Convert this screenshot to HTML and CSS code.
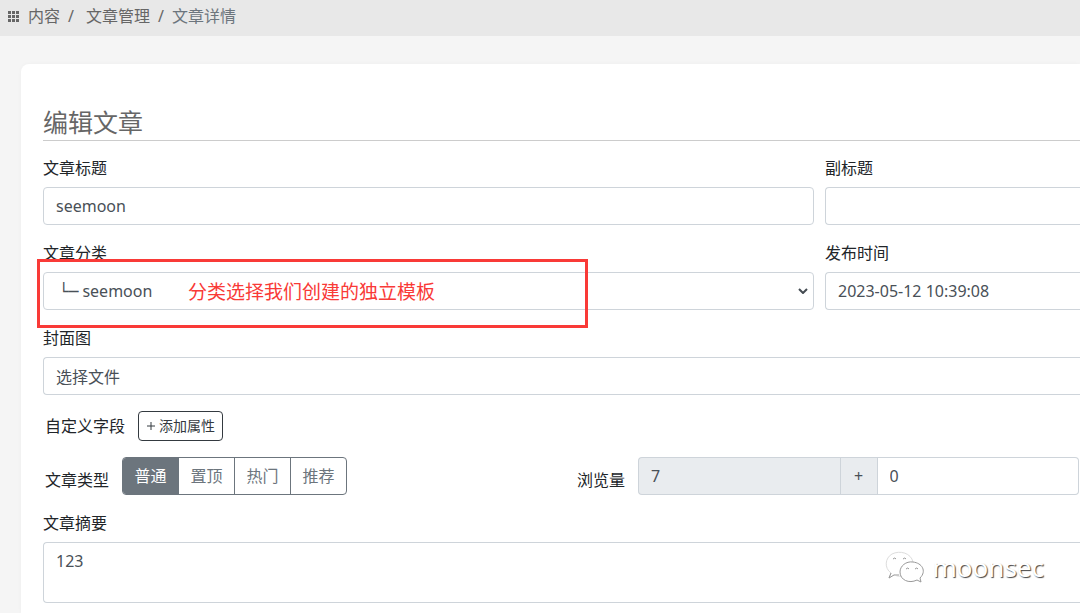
FILE: index.html
```html
<!DOCTYPE html>
<html lang="zh-CN">
<head>
<meta charset="utf-8">
<title>文章详情</title>
<link rel="stylesheet" href="styles.css">
</head>
<body>
<nav class="crumbs" aria-label="面包屑">
  <svg class="grid-icon" viewBox="0 0 11 11" aria-hidden="true"><path d="M0 0h3v3H0zM4 0h3v3H4zM8 0h3v3H8zM0 4h3v3H0zM4 4h3v3H4zM8 4h3v3H8zM0 8h3v3H0zM4 8h3v3H4zM8 8h3v3H8z"/></svg>
  <a class="crumb" href="#">内容</a>
  <span class="slash">/</span>
  <a class="crumb crumb-section" href="#">文章管理</a>
  <span class="slash">/</span>
  <span class="crumb current">文章详情</span>
</nav>
<main class="card">
  <h1 class="title">编辑文章</h1>
  <form class="form">
    <div class="columns">
      <div class="field">
        <label for="title">文章标题</label>
        <input class="control" id="title" type="text" value="seemoon">
      </div>
      <div class="field">
        <label for="subtitle">副标题</label>
        <input class="control bleed" id="subtitle" type="text">
      </div>
    </div>
    <div class="columns">
      <div class="field annotated">
        <label for="category">文章分类</label>
        <div class="select-wrap">
          <select class="control" id="category"><option>└─ seemoon</option></select>
          <svg class="chevron" viewBox="0 0 10 6" aria-hidden="true"><path d="M1 1l4 4 4-4"/></svg>
        </div>
        <div class="note">分类选择我们创建的独立模板</div>
      </div>
      <div class="field">
        <label for="published">发布时间</label>
        <input class="control bleed" id="published" type="text" value="2023-05-12 10:39:08">
      </div>
    </div>
    <div class="field">
      <label for="cover">封面图</label>
      <input class="control bleed" id="cover" type="text" value="选择文件" readonly>
    </div>
    <div class="inline">
      <span>自定义字段</span>
      <button class="add" type="button"><svg viewBox="0 0 10 10" aria-hidden="true"><path d="M5 1v8M1 5h8"/></svg>添加属性</button>
    </div>
    <div class="split">
      <div class="inline" role="radiogroup" aria-labelledby="kind">
        <span class="low" id="kind">文章类型</span>
        <div class="segments">
          <input type="radio" name="kind" id="k1" checked><label for="k1">普通</label>
          <input type="radio" name="kind" id="k2"><label for="k2">置顶</label>
          <input type="radio" name="kind" id="k3"><label for="k3">热门</label>
          <input type="radio" name="kind" id="k4"><label for="k4">推荐</label>
        </div>
      </div>
      <div class="inline">
        <label class="low" for="views">浏览量</label>
        <div class="group">
          <input class="control" id="views" type="text" value="7" readonly>
          <span class="plus">+</span>
          <input class="control" type="text" value="0" aria-label="增加浏览量">
        </div>
      </div>
    </div>
    <div class="field summary">
      <label for="summary">文章摘要</label>
      <textarea class="control bleed" id="summary">123</textarea>
      <div class="watermark">
        <svg viewBox="0 0 40 32" aria-hidden="true">
          <path class="faint" d="M18 25Q13 26 9 24L4 27L6 22C-1 17 0 7 7 3C15-1 26 2 28 11"/>
          <path d="M4 27L6 22M4 27L9 24L14 24"/>
          <path d="M28 11C21 10 15 15 15 21C15 29 24 33 32 29L36 31L35 27C42 20 37 12 28 11"/>
          <path d="M8 8q2-2 3 0M18 8q2-2 3 0M21 18q2-2 3 0M30 18q2-2 3 0"/>
        </svg>
        <span>moonsec</span>
      </div>
    </div>
  </form>
</main>
</body>
</html>
```
FILE: styles.css
```css
* { box-sizing: border-box; }

body {
  display: flex;
  flex-direction: column;
  min-height: 100vh;
  margin: 0;
  background: #f5f5f5;
  color: #212529;
  font: 16px/24px "Noto Sans", "DejaVu Sans", "Noto Sans CJK SC", sans-serif;
}

input, select, textarea, button { font: inherit; }

.crumbs {
  display: flex;
  align-items: center;
  height: 36px;
  padding: 0 8px 4px;
  background: #e8e8e8;
  color: #666;
}
.grid-icon { width: 11px; height: 11px; margin-right: 9px; fill: #666; }
.crumb { color: #666; text-decoration: none; }
.crumb-section { margin-left: 4px; }
.current { color: #6c757d; }
.slash { margin: 0 8px; }

.card {
  flex: 1;
  margin: 28px 0 0 21px;
  padding: 40px 0 0 22px;
  background: #fff;
  border-radius: 8px 0 0 0;
  box-shadow: 0 0 4px rgba(0, 0, 0, 0.03);
}
.title {
  margin: 0 0 15px;
  border-bottom: 1px solid #ccc;
  color: #666;
  font-size: 25px;
  font-weight: 400;
  line-height: 36px;
}

.form { display: flex; flex-direction: column; gap: 16px; }
.columns { display: grid; grid-template-columns: 771fr 255fr; gap: 11px; }
.field { display: flex; flex-direction: column; gap: 7px; min-width: 0; }

.control {
  width: 100%;
  min-width: 0;
  height: 38px;
  padding: 0 12px;
  border: 1px solid #ced4da;
  border-radius: 4px;
  background: #fff;
  color: #495057;
}
.bleed { border-right: 0; border-radius: 4px 0 0 4px; }

.select-wrap { display: grid; align-items: center; }
.select-wrap > * { grid-area: 1 / 1; }
.select-wrap select { appearance: none; padding-left: 15px; }
.chevron {
  justify-self: end;
  width: 10px;
  height: 6px;
  margin-right: 6px;
  fill: none;
  stroke: #444b52;
  stroke-width: 2;
  pointer-events: none;
}

.annotated { position: relative; }
.note {
  position: absolute;
  top: 18px;
  left: -6px;
  width: 551px;
  height: 69px;
  padding-left: 148px;
  border: 3px solid #f93a37;
  color: #f93a37;
  font-size: 19px;
  line-height: 60px;
  pointer-events: none;
}

.inline { display: flex; align-items: center; gap: 13px; padding-left: 2px; }
.add {
  display: flex;
  align-items: center;
  gap: 3px;
  height: 30px;
  padding: 0 7px;
  border: 1px solid #343a40;
  border-radius: 4px;
  background: #fff;
  color: #343a40;
  font-size: 14px;
}
.add svg { width: 10px; height: 10px; fill: none; stroke: #343a40; }

.split { display: grid; grid-template-columns: 532fr 505fr; }
.low { padding-top: 8px; white-space: nowrap; }

.segments { display: flex; border: 1px solid #6c757d; border-radius: 4px; overflow: hidden; }
.segments input { position: absolute; opacity: 0; pointer-events: none; }
.segments label {
  width: 56px;
  line-height: 36px;
  border-left: 1px solid #6c757d;
  color: #6c757d;
  text-align: center;
}
.segments label:first-of-type { width: 55px; border-left: 0; }
.segments input:checked + label { background: #6c757d; color: #fff; }

.group { display: flex; flex: 1; min-width: 0; padding-right: 1px; }
.group .control { flex: 1; }
.group .control:first-child { border-right: 0; border-radius: 4px 0 0 4px; background: #e9ecef; }
.group .control:last-child { border-left: 0; border-radius: 0 4px 4px 0; }
.plus {
  width: 38px;
  border: 1px solid #ced4da;
  background: #e9ecef;
  color: #495057;
  line-height: 36px;
  text-align: center;
}

.summary { position: relative; }
textarea.control { height: 61px; padding: 6px 12px; resize: none; }
.watermark {
  position: absolute;
  right: 36px;
  bottom: 18px;
  display: flex;
  align-items: center;
  gap: 8px;
  color: #fff;
  font-size: 26px;
  line-height: 36px;
  text-shadow: 1px 1px 1px #444;
  pointer-events: none;
}
.watermark svg { width: 40px; height: 32px; fill: #fff; stroke: #999; }
.watermark .faint { stroke: #ddd; }
```
